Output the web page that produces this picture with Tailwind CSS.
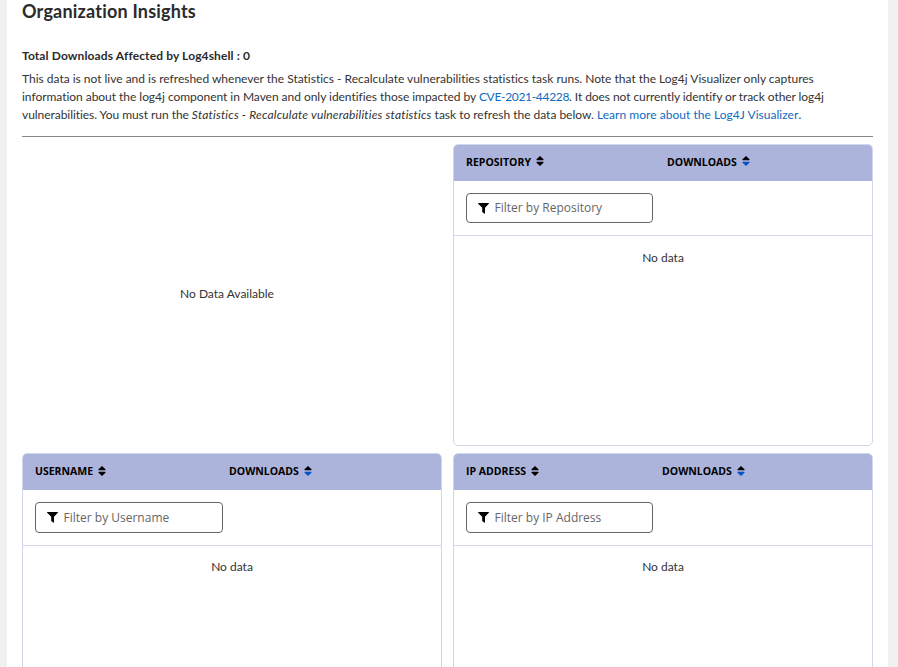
<!DOCTYPE html>
<html lang="en">
<head>
<meta charset="utf-8">
<title>Organization Insights</title>
<script src="https://cdn.jsdelivr.net/npm/@tailwindcss/browser@4"></script>
</head>
<body class="bg-[#f1f1f1] h-[667px] overflow-hidden font-['Lato',sans-serif] text-[#333] [font-variant-ligatures:none]">
<svg class="hidden">
  <symbol id="funnel" viewBox="0 0 11 11"><path d="M.5 0h10c.5 0 .6.5.3.8L7 4.800v5.400c0 .5-.4.6-.7.4L4.500 9.300c-.2-.1-.3-.3-.3-.5V4.800L.2.8C-.1.5 0 0 .5 0z"/></symbol>
  <symbol id="sort-up" viewBox="0 0 8 5"><path d="M4 0 7.500 3.300Q7.800 4.200 7 4.200H1Q.2 4.200.5 3.300z"/></symbol>
  <symbol id="sort-down" viewBox="0 0 8 5"><path d="M4 5 7.500 1.700Q7.800.8 7 .8H1Q.2.8.5 1.700z"/></symbol>
</svg>
<main class="ml-[7px] w-[881px] h-[667px] bg-white pl-[15px] pr-[15px] overflow-hidden">
  <h1 class="text-[18px] leading-[22px] font-bold text-[#2b2b2b] whitespace-nowrap tracking-[0.2px]">Organization Insights</h1>
  <h2 class="mt-[25px] text-[12px] leading-[18px] font-bold text-[#2b2b2b] whitespace-nowrap tracking-[0.125px]">Total Downloads Affected by Log4shell : 0</h2>
  <p class="mt-[5px] text-[12px] leading-[18px] whitespace-nowrap">
    <span class="block tracking-[-0.008px]">This data is not live and is refreshed whenever the Statistics - Recalculate vulnerabilities statistics task runs. Note that the Log4j Visualizer only captures</span>
    <span class="block tracking-[-0.036px]">information about the log4j component in Maven and only identifies those impacted by <a class="text-[#0f6bbd] tracking-[-0.32px]">CVE-2021-44228</a><span class="tracking-[-0.07px]">. It does not currently identify or track other log4j</span></span>
    <span class="block"><span class="tracking-[-0.05px]">vulnerabilities. You must run the </span><em class="tracking-[0.18px]">Statistics - Recalculate vulnerabilities statistics</em><span class="tracking-[-0.015px]"> task to refresh the data below. </span><a class="text-[#0f6bbd] tracking-[0.03px]">Learn more about the Log4J Visualizer</a>.</span>
  </p>
  <hr class="mt-3 border-0 h-px bg-[#888]">
  <div class="mt-[7px] grid grid-cols-[420px_420px] gap-x-[11px] gap-y-[7px] text-[12px]">
    <div class="h-[302px] pr-[10px] pb-0.5 flex items-center justify-center"><span>No Data Available</span></div>

    <section class="h-[302px] border border-[#d3d6ea] rounded-[5px] overflow-hidden">
      <div class="h-9 bg-[#adb4db] pl-3 flex items-center font-['Open_Sans',sans-serif] font-bold text-[10.5px] text-black whitespace-nowrap">
        <div class="w-[201px] flex items-center gap-[5px]"><span>REPOSITORY</span><span class="flex flex-col pb-[4px]"><svg class="w-2 h-[5px]"><use href="#sort-up"/></svg><svg class="w-2 h-[5px]"><use href="#sort-down"/></svg></span></div>
        <div class="flex items-center gap-[5px]"><span>DOWNLOADS</span><span class="flex flex-col pb-[4px]"><svg class="w-2 h-[5px]"><use href="#sort-up"/></svg><svg class="w-2 h-[5px] fill-[#0a52c4]"><use href="#sort-down"/></svg></span></div>
      </div>
      <div class="h-[55px] border-b border-[#d3d6ea] pl-3 pt-3">
        <div class="w-[187px] h-[30px] border border-[#666] rounded-[4px] pl-[11px] flex items-center gap-[5.500px] font-['Open_Sans',sans-serif] text-[#666]"><svg class="w-[11px] h-[11px] fill-black"><use href="#funnel"/></svg><span>Filter by Repository</span></div>
      </div>
      <div class="pt-[13px] leading-[18px] text-center">No data</div>
    </section>

    <section class="h-[302px] border border-[#d3d6ea] rounded-[5px] overflow-hidden">
      <div class="h-9 bg-[#adb4db] pl-3 pb-px flex items-center font-['Open_Sans',sans-serif] font-bold text-[10.5px] text-black whitespace-nowrap">
        <div class="w-[194px] flex items-center gap-[5px]"><span>USERNAME</span><span class="flex flex-col pb-px"><svg class="w-2 h-[5px]"><use href="#sort-up"/></svg><svg class="w-2 h-[5px]"><use href="#sort-down"/></svg></span></div>
        <div class="flex items-center gap-[5px]"><span>DOWNLOADS</span><span class="flex flex-col pb-px"><svg class="w-2 h-[5px]"><use href="#sort-up"/></svg><svg class="w-2 h-[5px] fill-[#0a52c4]"><use href="#sort-down"/></svg></span></div>
      </div>
      <div class="h-[56px] border-b border-[#d3d6ea] pl-3 pt-3">
        <div class="w-[188px] h-[31px] border border-[#666] rounded-[4px] pl-[11px] flex items-center gap-[5.500px] font-['Open_Sans',sans-serif] text-[#666]"><svg class="w-[11px] h-[11px] fill-black"><use href="#funnel"/></svg><span>Filter by Username</span></div>
      </div>
      <div class="pt-[12px] leading-[18px] text-center">No data</div>
    </section>

    <section class="h-[302px] border border-[#d3d6ea] rounded-[5px] overflow-hidden">
      <div class="h-9 bg-[#adb4db] pl-3 pb-px flex items-center font-['Open_Sans',sans-serif] font-bold text-[10.5px] text-black whitespace-nowrap">
        <div class="w-[196px] flex items-center gap-[5px]"><span>IP ADDRESS</span><span class="flex flex-col pb-px"><svg class="w-2 h-[5px]"><use href="#sort-up"/></svg><svg class="w-2 h-[5px]"><use href="#sort-down"/></svg></span></div>
        <div class="flex items-center gap-[5px]"><span>DOWNLOADS</span><span class="flex flex-col pb-px"><svg class="w-2 h-[5px]"><use href="#sort-up"/></svg><svg class="w-2 h-[5px] fill-[#0a52c4]"><use href="#sort-down"/></svg></span></div>
      </div>
      <div class="h-[56px] border-b border-[#d3d6ea] pl-3 pt-3">
        <div class="w-[187px] h-[31px] border border-[#666] rounded-[4px] pl-[11px] flex items-center gap-[5.500px] font-['Open_Sans',sans-serif] text-[#666]"><svg class="w-[11px] h-[11px] fill-black"><use href="#funnel"/></svg><span>Filter by IP Address</span></div>
      </div>
      <div class="pt-[12px] leading-[18px] text-center">No data</div>
    </section>
  </div>
</main>
</body>
</html>
